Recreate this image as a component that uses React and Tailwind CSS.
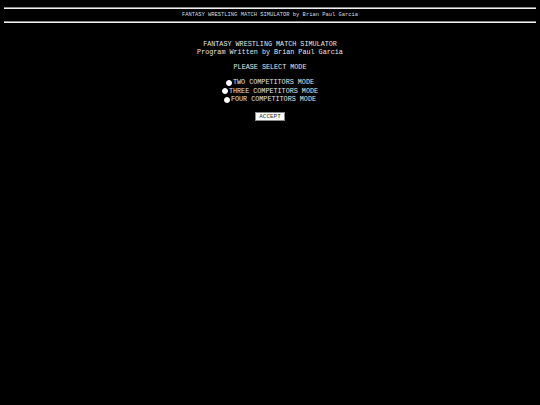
import React, { useState } from "react";

const modes = [
  { id: "two", label: "TWO COMPETITORS MODE" },
  { id: "three", label: "THREE COMPETITORS MODE" },
  { id: "four", label: "FOUR COMPETITORS MODE" },
];

const Rule = () => (
  <div className="h-0 border-t border-b border-t-[#8a8a8a] border-b-[#f0f0f0]" />
);

export default function App() {
  const [mode, setMode] = useState(null);

  return (
    <div className="min-h-[405px] bg-black text-[#e6e6e6] font-['Liberation_Mono',monospace] antialiased">
      <div className="px-[4px] pt-[7px]">
        <Rule />
        <div className="text-center text-[5.45px] leading-[12px] text-[#dcdcdc]">
          FANTASY WRESTLING MATCH SIMULATOR by Brian Paul Garcia
        </div>
        <Rule />
      </div>

      <div className="mt-[18px] flex flex-col items-center text-[6.75px] leading-[7.5px]">
        <div>FANTASY WRESTLING MATCH SIMULATOR</div>
        <div>Program Written by Brian Paul Garcia</div>

        <div className="mt-[7.5px]">PLEASE SELECT MODE</div>

        <div className="mt-[8px] flex flex-col items-center gap-[1px]">
          {modes.map((m) => (
            <label key={m.id} className="flex items-center cursor-pointer">
              <span
                className={
                  "mr-[1px] inline-block h-[6px] w-[6px] rounded-full border border-white " +
                  (mode === m.id ? "bg-[#3b82f6]" : "bg-white")
                }
                onClick={() => setMode(m.id)}
              />
              <span onClick={() => setMode(m.id)}>{m.label}</span>
            </label>
          ))}
        </div>

        <button className="mt-[8px] bg-white text-[#333] border border-[#888] px-[3px] text-[6px] leading-[7px]">
          ACCEPT
        </button>
      </div>
    </div>
  );
}
